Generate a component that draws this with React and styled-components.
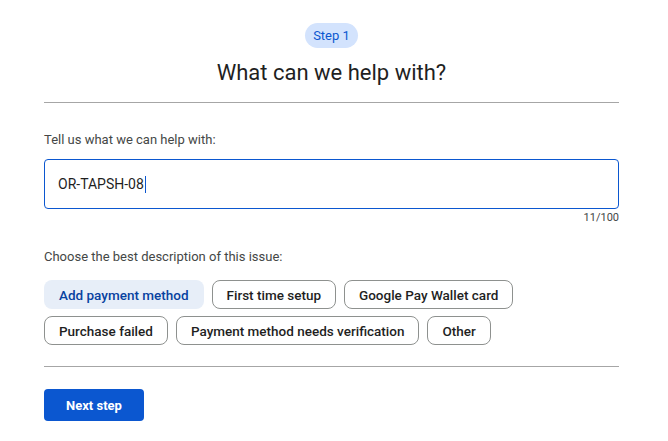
import React from "react";
import styled, { createGlobalStyle } from "styled-components";

const Global = createGlobalStyle`
  html, body { margin: 0; padding: 0; background: #fff; }
  body { font-family: Roboto, "Noto Sans", Arial, sans-serif; color: #1f1f1f; }
`;

const Page = styled.div`
  width: 575px;
  margin-left: 44px;
  padding-top: 23px;
`;

const Header = styled.header`
  display: flex;
  flex-direction: column;
  align-items: center;
  padding-bottom: 16px;
  border-bottom: 1px solid #a6a6a6;
`;

const StepPill = styled.span`
  display: inline-flex;
  align-items: center;
  height: 25px;
  padding: 0 8px;
  border-radius: 13px;
  background: #d3e3fd;
  color: #0b57d0;
  font-size: 13px;
  font-weight: 400;
`;

const Title = styled.h1`
  margin: 12px 0 0;
  font-size: 22px;
  font-weight: 400;
  line-height: 26px;
  color: #1f1f1f;
`;

const Section = styled.section`
  display: flex;
  flex-direction: column;
  padding-top: ${(p) => p.$top}px;
`;

const Label = styled.label`
  font-size: 13px;
  line-height: 18px;
  color: #444746;
`;

const InputBox = styled.div`
  margin-top: 10px;
  height: 50px;
  box-sizing: border-box;
  border: 1px solid #0b57d0;
  border-radius: 4px;
  display: flex;
  align-items: center;
  padding: 0 13px;
  font-size: 14px;
  color: #1f1f1f;
`;

const Caret = styled.span`
  display: inline-block;
  width: 1px;
  height: 17px;
  background: #0b57d0;
  margin-left: 1px;
`;

const Counter = styled.div`
  align-self: flex-end;
  margin-top: 2px;
  font-size: 11px;
  line-height: 14px;
  color: #444746;
`;

const ChipWrap = styled.div`
  margin-top: 14px;
  display: flex;
  flex-wrap: wrap;
  gap: 7px 8px;
  padding-bottom: 21px;
  border-bottom: 1px solid #a6a6a6;
`;

const Chip = styled.button`
  height: 29px;
  box-sizing: border-box;
  padding: 0 ${(p) => (p.$selected ? 15 : 14)}px;
  border-radius: 8px;
  border: ${(p) => (p.$selected ? "none" : "1px solid #8e918f")};
  background: ${(p) => (p.$selected ? "#e7eef8" : "#fff")};
  color: ${(p) => (p.$selected ? "#0842a0" : "#1f1f1f")};
  font-family: Roboto, "Noto Sans", Arial, sans-serif;
  font-size: 13.5px;
  font-weight: 500;
  cursor: pointer;
`;

const Footer = styled.div`
  padding-top: 22px;
`;

const Primary = styled.button`
  width: 100px;
  height: 32px;
  border: none;
  border-radius: 4px;
  background: #0b57d0;
  color: #fff;
  font-family: Roboto, "Noto Sans", Arial, sans-serif;
  font-size: 13px;
  font-weight: 700;
  cursor: pointer;
`;

const chips = [
  "Add payment method",
  "First time setup",
  "Google Pay Wallet card",
  "Purchase failed",
  "Payment method needs verification",
  "Other",
];

export default function App() {
  return (
    <>
      <Global />
      <Page>
        <Header>
          <StepPill>Step 1</StepPill>
          <Title>What can we help with?</Title>
        </Header>
        <Section $top={28}>
          <Label>Tell us what we can help with:</Label>
          <InputBox>
            OR-TAPSH-08
            <Caret />
          </InputBox>
          <Counter>11/100</Counter>
        </Section>
        <Section $top={23}>
          <Label>Choose the best description of this issue:</Label>
          <ChipWrap>
            {chips.map((c, i) => (
              <Chip key={c} $selected={i === 0}>
                {c}
              </Chip>
            ))}
          </ChipWrap>
        </Section>
        <Footer>
          <Primary>Next step</Primary>
        </Footer>
      </Page>
    </>
  );
}
